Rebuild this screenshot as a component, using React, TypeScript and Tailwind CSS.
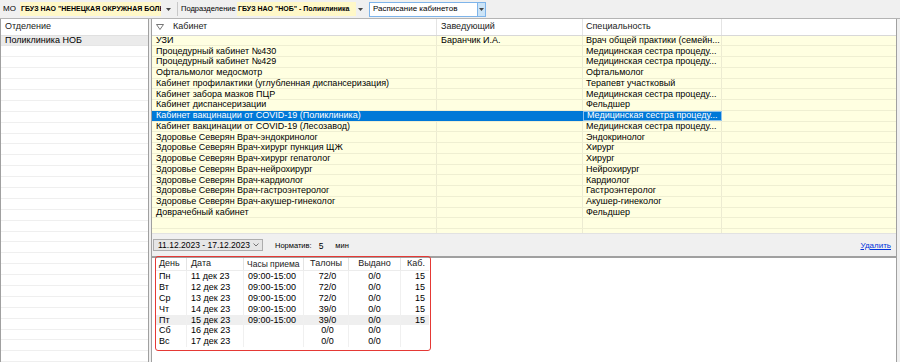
import React from "react";

const cabinets: [string, string, string][] = [
  ["УЗИ", "Баранчик И.А.", "Врач общей практики (семейн..."],
  ["Процедурный кабинет №430", "", "Медицинская сестра процеду..."],
  ["Процедурный кабинет №429", "", "Медицинская сестра процеду..."],
  ["Офтальмолог медосмотр", "", "Офтальмолог"],
  ["Кабинет профилактики (углубленная диспансеризация)", "", "Терапевт участковый"],
  ["Кабинет забора мазков ПЦР", "", "Медицинская сестра процеду..."],
  ["Кабинет диспансеризации", "", "Фельдшер"],
  ["Кабинет вакцинации от COVID-19 (Поликлиника)", "", "Медицинская сестра процеду..."],
  ["Кабинет вакцинации от COVID-19 (Лесозавод)", "", "Медицинская сестра процеду..."],
  ["Здоровье Северян Врач-эндокринолог", "", "Эндокринолог"],
  ["Здоровье Северян Врач-хирург пункция ЩЖ", "", "Хирург"],
  ["Здоровье Северян Врач-хирург гепатолог", "", "Хирург"],
  ["Здоровье Северян Врач-нейрохирург", "", "Нейрохирург"],
  ["Здоровье Северян Врач-кардиолог", "", "Кардиолог"],
  ["Здоровье Северян Врач-гастроэнтеролог", "", "Гастроэнтеролог"],
  ["Здоровье Северян Врач-акушер-гинеколог", "", "Акушер-гинеколог"],
  ["Доврачебный кабинет", "", "Фельдшер"],
  ["", "", ""],
  ["", "", ""],
];

const schedule = [
  ["Пн", "11 дек 23", "09:00-15:00", "72/0", "0/0", "15"],
  ["Вт", "12 дек 23", "09:00-15:00", "72/0", "0/0", "15"],
  ["Ср", "13 дек 23", "09:00-15:00", "72/0", "0/0", "15"],
  ["Чт", "14 дек 23", "09:00-15:00", "39/0", "0/0", "15"],
  ["Пт", "15 дек 23", "09:00-15:00", "39/0", "0/0", "15"],
  ["Сб", "16 дек 23", "", "0/0", "0/0", ""],
  ["Вс", "17 дек 23", "", "0/0", "0/0", ""],
];

const SELECTED = 7;

const Arrow = () => (
  <svg width="5" height="3" viewBox="0 0 5 3">
    <path d="M0 0h5L2.5 3z" fill="#444" />
  </svg>
);

const App = () => {
  return (
    <div className="w-[900px] h-[362px] overflow-hidden bg-[#f0f0f0] flex flex-col font-['Liberation_Sans',Arial,sans-serif] text-[9px] text-black">
      {/* top filter bar */}
      <div className="h-[19px] flex items-center border-b border-[#b4b4b4] shrink-0">
        <span className="ml-[3px] w-[17px] text-[8px]">МО</span>
        <div className="w-[141px] h-[14px] bg-[#fff8c8] flex items-center pl-[1px] overflow-hidden whitespace-nowrap font-bold text-[7px]">
          ГБУЗ НАО "НЕНЕЦКАЯ ОКРУЖНАЯ БОЛЬНИЦА"
        </div>
        <div className="w-[14px] flex justify-center"><Arrow /></div>
        <div className="w-px h-[14px] bg-[#c8c8c8] mx-[2px]" />
        <span className="text-[7.5px] ml-[1px] w-[56px] whitespace-nowrap overflow-hidden">Подразделение</span>
        <div className="w-[119px] h-[14px] bg-[#fff8c8] flex items-center pl-[1px] overflow-hidden whitespace-nowrap font-bold text-[7px]">
          ГБУЗ НАО "НОБ" - Поликлиника
        </div>
        <div className="w-[9px] flex justify-center"><Arrow /></div>
        <div className="w-[117px] h-[15px] bg-white border border-[#7eb4ea] flex items-center ml-[4px]">
          <span className="flex-1 pl-[3px] text-[8px] whitespace-nowrap">Расписание кабинетов</span>
          <div className="w-[8px] h-full bg-[#cce4f7] border-l border-[#7eb4ea] flex items-center justify-center"><Arrow /></div>
        </div>
      </div>

      <div className="flex flex-1 min-h-0">
        {/* left panel */}
        <div className="w-[149px] bg-white border-l border-r border-[#a0a0a0] flex flex-col overflow-hidden">
          <div className="h-[16.5px] shrink-0 flex items-center pl-[4px] border-b border-[#e0e0e0] text-[#222]">Отделение</div>
          <div className="h-[10.9px] shrink-0 flex items-center pl-[4px] bg-[#ebebeb] border-b border-[#e6e6e6]">Поликлиника НОБ</div>
          {Array.from({ length: 30 }).map((_, i) => (
            <div key={i} className="h-[10.9px] shrink-0 border-b border-[#efefef]" />
          ))}
        </div>

        <div className="w-[2px]" />

        {/* right panel */}
        <div className="w-[746px] flex flex-col border-l border-r border-[#a0a0a0]">
          {/* cabinets grid */}
          <div className="h-[214px] shrink-0 bg-[#ffffe1] overflow-hidden flex flex-col">
            <div className="h-[16.5px] shrink-0 flex bg-white border-b border-[#d8d8d8] text-[#222]">
              <div className="w-[285px] flex items-center gap-[9px] pl-[4px] border-r border-[#e4e4e4]">
                <svg width="8" height="6" viewBox="0 0 8 6">
                  <path d="M0.5 0.5h7L4 5.5z" fill="none" stroke="#666" strokeWidth="0.9" />
                </svg>
                <span>Кабинет</span>
              </div>
              <div className="w-[146px] flex items-center pl-[4px] border-r border-[#e4e4e4]">Заведующий</div>
              <div className="w-[139px] flex items-center pl-[3px] border-r border-[#e4e4e4]">Специальность</div>
              <div className="flex-1" />
            </div>
            {cabinets.map(([name, head, spec], i) => {
              const sel = i === SELECTED;
              return (
                <div key={i} className="h-[10.75px] shrink-0 flex border-b border-[#efefd2] leading-none">
                  <div className={`w-[285px] flex items-center pl-[4px] whitespace-nowrap overflow-hidden border-r ${sel ? "bg-[#0078d7] text-white border-[#0078d7]" : "border-[#ecebd2]"}`}>{name}</div>
                  <div className={`w-[146px] flex items-center pl-[4px] whitespace-nowrap overflow-hidden border-r ${sel ? "bg-[#0078d7] text-white border-[#0078d7]" : "border-[#ecebd2]"}`}>{head}</div>
                  <div className={`w-[139px] flex items-center pl-[3px] whitespace-nowrap overflow-hidden border-r ${sel ? "bg-[#0078d7] text-white border border-[#8fc1ec]" : "border-[#ecebd2]"}`}>{spec}</div>
                  <div className="flex-1" />
                </div>
              );
            })}
          </div>

          {/* toolbar */}
          <div className="h-[23px] shrink-0 flex items-center border-t border-[#e2e2e2]">
            <div className="ml-[1px] w-[110px] h-[12px] bg-[#e6e6e6] border border-[#adadad] flex items-center pl-[4px] pr-[3px] text-[8.5px]">
              <span className="flex-1 whitespace-nowrap">11.12.2023 - 17.12.2023</span>
              <svg width="6" height="4" viewBox="0 0 6 4">
                <path d="M0.5 0.5L3 3l2.5-2.5" fill="none" stroke="#555" strokeWidth="0.8" />
              </svg>
            </div>
            <span className="ml-[12px] text-[7.5px] pt-[2px]">Норматив:</span>
            <span className="ml-[7px] text-[8.5px] pt-[2px]">5</span>
            <span className="ml-[12px] text-[7.5px] pt-[2px]">мин</span>
            <div className="flex-1" />
            <span className="mr-[5px] text-[8px] text-[#0033dd] underline pt-[2px]">Удалить</span>
          </div>

          {/* schedule grid */}
          <div className="flex-1 bg-white border-t-2 border-[#a0a0a0] relative">
            <div className="ml-[4px] w-[273px] flex flex-col">
              <div className="h-[13px] flex text-[#222] border-b border-[#ececec]">
                <div className="w-[31px] flex items-center pl-[3px] border-r border-[#e4e4e4]">День</div>
                <div className="w-[57px] flex items-center pl-[4px] border-r border-[#e4e4e4]">Дата</div>
                <div className="w-[60px] flex items-center pl-[3px] whitespace-nowrap overflow-hidden border-r border-[#e4e4e4] text-[8.5px]">Часы приема</div>
                <div className="w-[45px] flex items-center justify-center border-r border-[#e4e4e4]">Талоны</div>
                <div className="w-[52px] flex items-center justify-center border-r border-[#e4e4e4]">Выдано</div>
                <div className="w-[28px] flex items-center justify-end pr-[4px]">Каб.</div>
              </div>
              {schedule.map((r, i) => (
                <div key={i} className={`h-[10.9px] flex leading-none ${i === 4 ? "bg-[#efefef]" : ""}`}>
                  <div className="w-[31px] flex items-center pl-[3px] border-r border-[#f0f0f0]">{r[0]}</div>
                  <div className="w-[57px] flex items-center pl-[4px] border-r border-[#f0f0f0]">{r[1]}</div>
                  <div className="w-[60px] flex items-center pl-[4px] border-r border-[#f0f0f0]">{r[2]}</div>
                  <div className="w-[45px] flex items-center justify-center pl-[3px] border-r border-[#f0f0f0]">{r[3]}</div>
                  <div className="w-[52px] flex items-center justify-center border-r border-[#f0f0f0]">{r[4]}</div>
                  <div className="w-[28px] flex items-center justify-end pr-[4px]">{r[5]}</div>
                </div>
              ))}
            </div>
            {/* red annotation frame */}
            <div className="absolute left-[3px] top-[-2px] w-[276px] h-[95px] border-[1.5px] border-[#e53935] rounded-[3px] pointer-events-none" />
          </div>
        </div>
      </div>
    </div>
  );
};

export default App;
